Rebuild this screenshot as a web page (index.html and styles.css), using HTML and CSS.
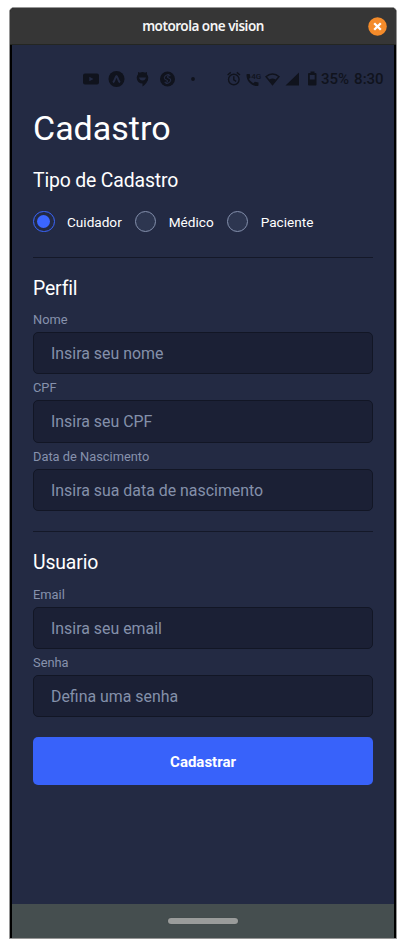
FILE: index.html
```html
<!DOCTYPE html>
<html lang="pt-BR">
<head>
<meta charset="utf-8">
<title>Cadastro</title>
<link rel="stylesheet" href="styles.css">
</head>
<body>
<div class="window">
  <header class="titlebar">
    <span class="window-title">motorola one vision</span>
    <button class="close" aria-label="Fechar"><svg width="19" height="19" viewBox="0 0 19 19"><circle cx="9.5" cy="9.5" r="9.3" fill="#f48b2a"/><path d="M6.2 6.2l6.6 6.6M12.8 6.2l-6.6 6.6" stroke="#fff" stroke-width="2.3"/></svg></button>
  </header>
  <div class="device">
    <main class="screen">
      <div class="status">
        <svg class="notifications" width="116" height="18" viewBox="0 0 116 18">
          <path fill-rule="evenodd" d="M3 3.5H15Q17 3.5 17 5.5V12.500Q17 14.500 15 14.500H3Q1 14.500 1 12.500V5.500Q1 3.500 3 3.500ZM7.300 6.700V11.300L11.500 9Z"/>
          <circle cx="34.500" cy="9" r="8"/>
          <path class="cut" d="M31 12.500C33 11 33.500 6 34.500 6S36 11 38 12.500"/>
          <circle cx="60.500" cy="7.800" r="5.800"/>
          <path d="M56 4.500V2L58 2.800ZM65 4.500V2L63 2.800ZM60.500 12.500V16.500Q65 14 66 9Z"/>
          <path class="hole" d="M57 7.400H64Q63.300 10.400 60.500 10.400T57 7.400Z"/>
          <circle cx="85.500" cy="9" r="7.500"/>
          <path class="cut thin" d="M87.500 4.200C84 4.500 81.500 7 82.500 8.800C83.500 10.300 86 9.800 85.500 11.300C85.200 12.200 84 12.500 82.500 12.300M83.500 13.800C87 13.500 89.500 11 88.500 9.200C87.500 7.700 85 8.200 85.500 6.700C85.800 5.800 87 5.500 88.500 5.700"/>
          <circle cx="111" cy="9" r="1.900"/>
        </svg>
        <svg class="indicators" width="92" height="18" viewBox="0 0 92 18">
          <g class="line"><circle cx="6.800" cy="9.500" r="5.300"/><path d="M6.800 6.300V9.800L9.200 11.300M.600 5L3.800 2.400M9.800 2.400L13 5"/></g>
          <path d="M20 4H22.700L23.500 7.500L21.900 9Q23.500 11.800 26.300 13.200L27.900 11.700L31.500 12.500V15.200Q31.500 16 30.500 16C24 16 19.500 11 19.500 5Q19.500 4 20 4Z"/>
          <text x="24.200" y="8.800">4G</text>
          <path fill-rule="evenodd" d="M38 6.500Q45.500 .2 53 6.500L45.500 15.700ZM40 6.800L42.500 9.600Q45.500 7.500 48.500 9.600L51 6.800Q45.500 2.800 40 6.800Z"/>
          <path d="M58.500 15.500L72 2.500V15.500Z"/>
          <path fill-rule="evenodd" d="M83.500 1.500H87.500V3H88.500Q89.500 3 89.500 4V14.500Q89.500 15.500 88.500 15.500H82Q81 15.500 81 14.500V4Q81 3 82 3H83.500ZM82.800 5V9.500H87.700V5Z"/>
        </svg>
        <span class="battery">35%</span>
        <span class="clock">8:30</span>
      </div>
      <form class="form">
        <h1>Cadastro</h1>
        <h2 class="type-title">Tipo de Cadastro</h2>
        <div class="options">
          <label class="option"><span class="radio selected"></span><span>Cuidador</span></label>
          <label class="option"><span class="radio"></span><span>Médico</span></label>
          <label class="option"><span class="radio"></span><span>Paciente</span></label>
        </div>
        <section class="group">
          <h2>Perfil</h2>
          <div class="field"><label>Nome</label><div class="input">Insira seu nome</div></div>
          <div class="field"><label>CPF</label><div class="input">Insira seu CPF</div></div>
          <div class="field"><label>Data de Nascimento</label><div class="input">Insira sua data de nascimento</div></div>
        </section>
        <section class="group">
          <h2>Usuario</h2>
          <div class="field"><label>Email</label><div class="input">Insira seu email</div></div>
          <div class="field"><label>Senha</label><div class="input">Defina uma senha</div></div>
        </section>
        <button class="submit" type="button">Cadastrar</button>
      </form>
    </main>
    <nav class="navbar"><span class="handle"></span></nav>
  </div>
</div>
</body>
</html>
```
FILE: styles.css
```css
* { box-sizing: border-box; }
body { margin: 0; height: 948px; padding: 7px 9px 9px; background: #fff; font-family: Roboto, sans-serif; overflow: hidden; }
.window { width: 388px; height: 932px; border: 1px solid #969696; border-radius: 5px 5px 0 0; background: #000; overflow: hidden; display: flex; flex-direction: column; }
.titlebar { height: 37px; flex: none; background: #363636; border-bottom: 1px solid #242622; display: grid; grid-template-columns: 28px 1fr 28px; align-items: center; }
.window-title { grid-column: 2; text-align: center; color: #f5f5f5; font: 600 13.500px/18px "Noto Sans", sans-serif; font-stretch: 87.5%; letter-spacing: -.5px; }
.close { border: 0; padding: 0; background: none; width: 19px; height: 19px; }
.close svg { display: block; }
.device { flex: 1; margin: 0 2px; display: flex; flex-direction: column; }
.screen { flex: 1; background: #232a43; }
.status { height: 63px; padding: 25px 10px 0 70px; display: flex; align-items: flex-start; color: #10131d; font-size: 15px; line-height: 18px; font-weight: 500; }
.status svg { fill: #10131d; flex: none; }
.indicators { margin-left: 29px; }
.status .cut { fill: none; stroke: #232a43; stroke-width: 2; }
.status .thin { stroke-width: 1.1; }
.status .hole { fill: #232a43; }
.status .line { fill: none; stroke: #10131d; stroke-width: 1.4; }
.status text { font-size: 8px; font-weight: 500; }
.battery { margin-left: 2px; }
.clock { margin-left: 5px; }
.form { width: 340px; margin-left: 21px; color: #fff; }
h1, h2 { margin: 0; font-weight: 400; }
h1 { font-size: 34px; line-height: 40px; }
h2 { font-size: 19.400px; height: 24px; line-height: 26px; letter-spacing: -.15px; }
.type-title { margin-top: 20px; }
.options { margin-top: 18.500px; height: 22px; display: flex; gap: 13px; }
.option { display: flex; align-items: center; gap: 12.500px; font-size: 13.600px; line-height: 22px; }
.radio { width: 21.500px; height: 21.500px; flex: none; border: 1px solid #8490ad; border-radius: 50%; background: #2d3650; display: grid; place-items: center; }
.radio.selected { border-color: #3b66ff; background: #232a43; }
.radio.selected::after { content: ""; width: 13px; height: 13px; border-radius: 50%; background: #3b66ff; }
.group { margin-top: 20px; border-top: 1px solid #141828; padding-top: 18.100px; }
.options + .group { margin-top: 24px; }
.group h2 { margin-bottom: 12.500px; }
.field { height: 68.400px; }
.field:last-child { height: 62.300px; }
.field label { display: block; color: #8792ad; font-size: 12.850px; line-height: 15px; height: 19.900px; }
.input { height: 42.400px; border: 1px solid #121625; border-radius: 5px; background: #1b2035; color: #8490aa; padding-left: 17px; font-size: 15.900px; line-height: 42.500px; }
.submit { display: block; width: 100%; height: 48px; margin-top: 20px; padding: 2px 0 0; border: 0; border-radius: 5px; background: #3862fa; color: #fff; font: 700 15px/46px Roboto, sans-serif; }
.navbar { height: 34px; background: #454e4f; display: flex; justify-content: center; align-items: center; }
.handle { width: 70px; height: 6px; border-radius: 3px; background: #9a9c9b; box-shadow: 0 0 1px #343c3d; }
```
